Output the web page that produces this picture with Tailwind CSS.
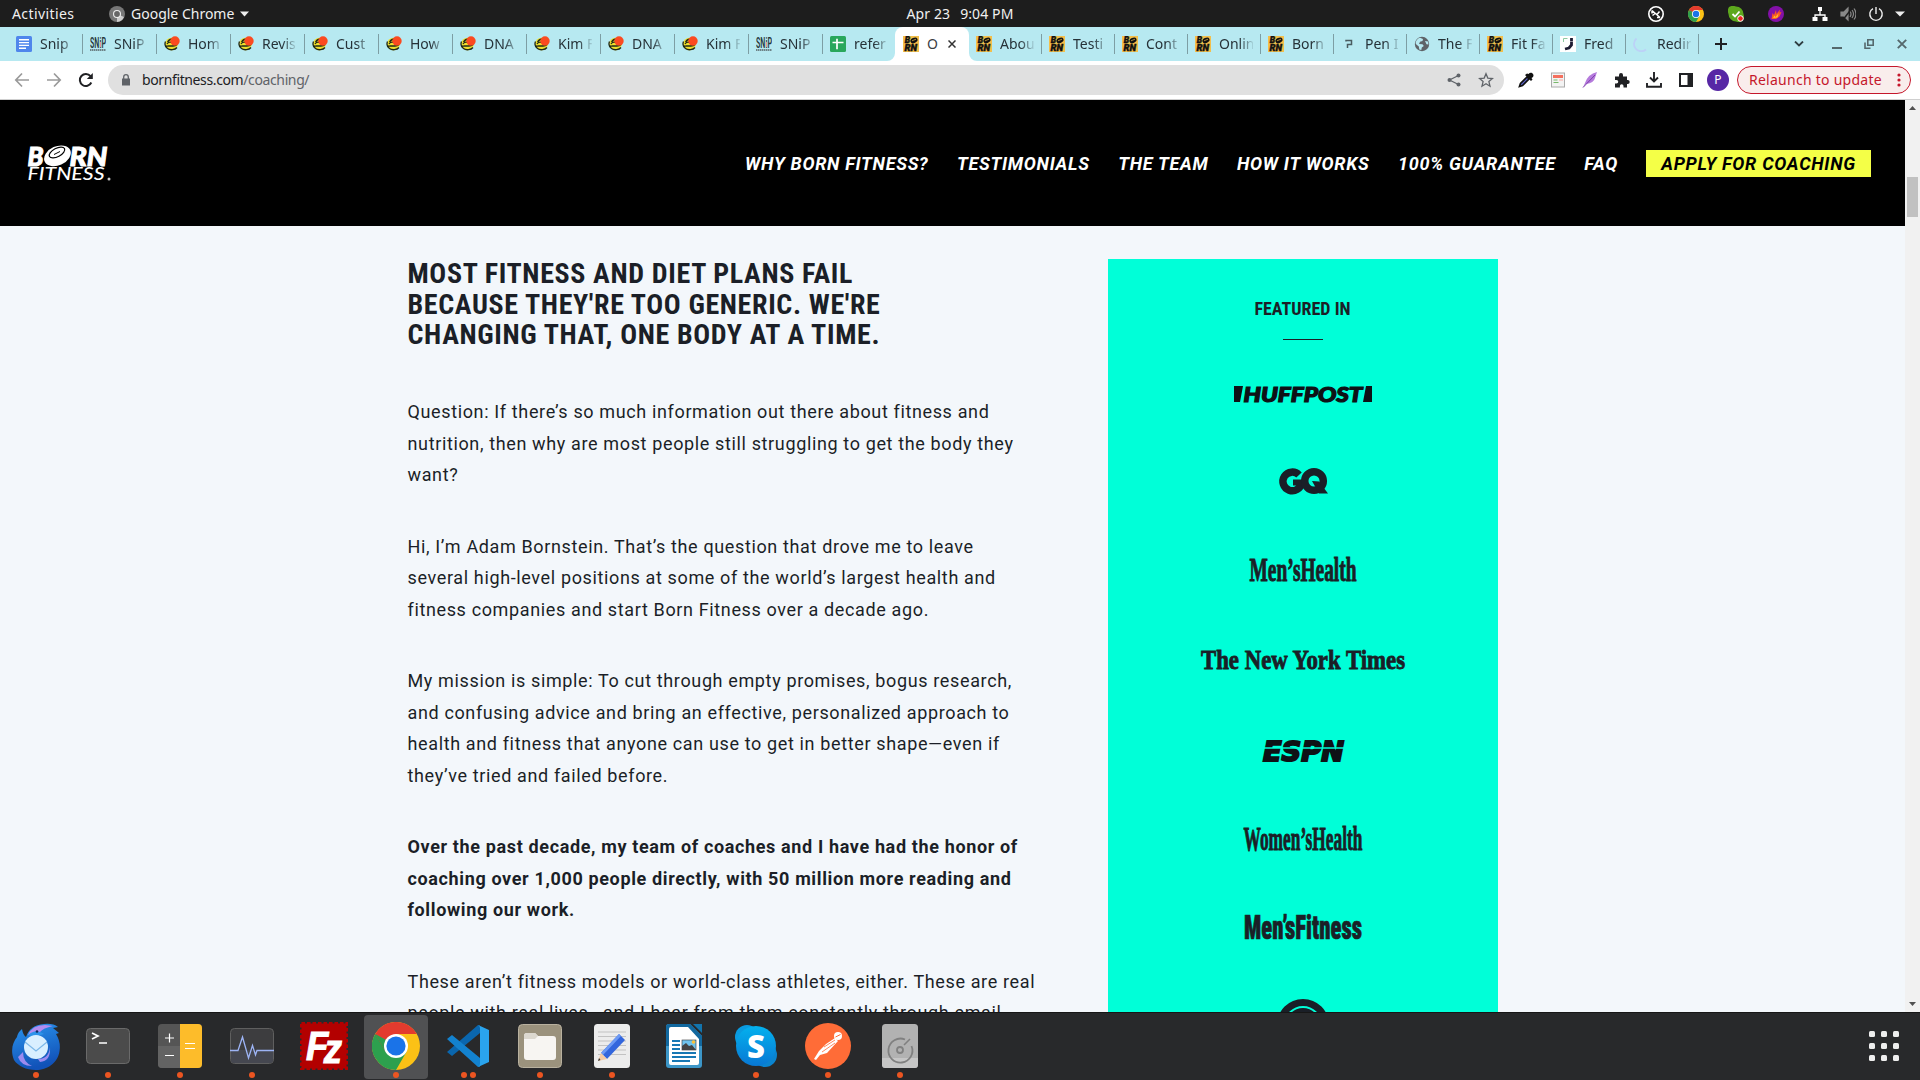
<!DOCTYPE html>
<html lang="en">
<head>
<meta charset="utf-8">
<title>Born Fitness Coaching</title>
<script src="https://cdn.jsdelivr.net/npm/@tailwindcss/browser@4"></script>
</head>
<body class="w-[1920px] h-[1080px] overflow-hidden flex flex-col bg-[#f3f7fb] font-['Noto_Sans',sans-serif] text-[14px]">

<svg class="hidden">
  <symbol id="f-doc" viewBox="0 0 16 16"><rect width="16" height="16" rx="1.5" fill="#4f86ec"/><path d="M3 3.8h10M3 6.6h10M3 9.4h10M3 12.2h7" stroke="#fff" stroke-width="1.4"/></symbol>
  <symbol id="f-snip" viewBox="0 0 16 16"><text x="0" y="11.5" font-family="Roboto Condensed, Roboto" font-weight="500" font-size="15" textLength="16" lengthAdjust="spacingAndGlyphs" fill="#25373b">SNiP</text><path d="M10.5 6v5" stroke="#e88f9a"/><path d="M0 14h16" stroke="#6d8287" stroke-width="2" stroke-dasharray="1.5 .5"/></symbol>
  <symbol id="f-burger" viewBox="0 0 16 16"><circle cx="7.500" cy="8" r="6.300" fill="#efdf2c"/><path d="M1.500 5.500C.5 8 1.500 11 3.500 12.500 6 14.500 11 14 13 11.500M1 8.500c0 2 2 1.500 3 1.500h5c2 0 3-.5 4-1.500M3.500 6q2-3 5-3M3 8q2-3 6-1" fill="none" stroke="#222a18" stroke-width="1.300"/><circle cx="11" cy="5" r="4.700" fill="#fb4a20"/></symbol>
  <symbol id="f-sheet" viewBox="0 0 16 16"><rect width="16" height="16" rx="1.5" fill="#29a75c"/><path d="M2.500 6.500h11M7 2.800v10.500" stroke="#fff" stroke-width="1.700"/></symbol>
  <symbol id="f-born" viewBox="0 0 16 16"><rect width="16" height="16" fill="#f3bf4b"/><g font-family="Roboto" font-weight="900" font-style="italic" font-size="8.500" fill="#111" stroke="#111" stroke-width=".4"><text x="1.800" y="7.200">B</text><text x="1.400" y="14.600" textLength="12.500" lengthAdjust="spacingAndGlyphs">RN</text></g><ellipse cx="11" cy="4.400" rx="3.700" ry="2.600" transform="rotate(-25 11 4.400)" fill="#111"/><path d="M9 4.800l4-1.600" stroke="#f3bf4b" stroke-width=".7"/></symbol>
  <symbol id="f-pen" viewBox="0 0 16 16"><path d="M5 5.500V4.500h5.500v4H6.500V12" fill="none" stroke="#4a5c60" stroke-width="1.500"/></symbol>
  <symbol id="f-globe" viewBox="0 0 16 16"><circle cx="8" cy="8" r="7.200" fill="#5f6368"/><path d="M6 1.800l3 1.200-.5 2-2.500.8L5 8l3.500.3 1.300 1.700-2 1.500-.5 2.500-2-.5-.5-3L1.800 8C1.500 5 3.500 2.500 6 1.800zM11 5l3 .5.500 3-2-.3z" fill="#b7e9f1"/></symbol>
  <symbol id="f-fred" viewBox="0 0 16 16"><rect width="16" height="16" fill="#fff"/><path d="M3.500 6V2.500h4" stroke="#8cc9a0" fill="none"/><path d="M11.500 2v3.500M11.500 6v3l-2.500 3-4 1" fill="none" stroke="#1d1c33" stroke-width="2.800"/></symbol>
  <symbol id="f-load" viewBox="0 0 16 16"><path d="M3.500 2.500A7 7 0 0 0 13 13.500" fill="none" stroke="#bcd1f7" stroke-width="1.800"/></symbol>
  <symbol id="chrome" viewBox="0 0 48 48"><circle cx="24" cy="24" r="24" fill="#fbc116"/><path d="M24 24L3.200 12A24 24 0 0 0 24 48L34.400 30z" fill="#2da04e"/><path d="M24 24H24L3.200 12A24 24 0 0 1 44.800 12H24z" fill="#e33b2e"/><path d="M3.200 12L13.600 30 24 12z" fill="#e33b2e"/><path d="M3.200 12L13.600 30 18 20z" fill="#2da04e"/><circle cx="24" cy="24" r="12" fill="#fff"/><circle cx="24" cy="24" r="9.600" fill="#1a73e8"/></symbol>
</svg>

<!-- Desktop top bar -->
<header class="h-[27px] shrink-0 bg-[#1d1d1d] text-[#f0f0f0] grid grid-cols-[1fr_auto_1fr] items-center leading-[26px]">
  <div class="flex items-center pl-3">
    <span class="tracking-[0.4px] w-[97px]">Activities</span>
    <svg class="size-4" viewBox="0 0 16 16"><circle cx="8" cy="8" r="8" fill="#777"/><path d="M8 8l7 3a8 8 0 0 1-7 5z" fill="#ccc"/><circle cx="8" cy="8" r="4" fill="#eee"/><circle cx="8" cy="8" r="2.900" fill="#666"/></svg>
    <span class="ml-[6px]">Google Chrome</span>
    <svg class="ml-[6px] w-[9px] h-[6px]" viewBox="0 0 9 6"><path d="M0 .5h9L4.500 5.500z" fill="#eee"/></svg>
  </div>
  <div class="flex gap-[10px] tracking-[0.1px]"><span>Apr 23</span><span>9:04 PM</span></div>
  <div class="flex items-center justify-end pr-[15px]">
    <svg class="size-4 mr-6" viewBox="0 0 16 16"><circle cx="8" cy="8" r="7.200" fill="none" stroke="#fff" stroke-width="1.600"/><path d="M4 4.500l8 7M4.500 9.500L7 7.500M9 8.500l2.500-3M4 4.500v3M12 11.500H9" fill="none" stroke="#fff" stroke-width="1.500"/></svg>
    <svg class="size-4 mr-6"><use href="#chrome"/></svg>
    <svg class="size-4 mr-6" viewBox="0 0 16 16"><path d="M1 1Q4-1 8 .5A7.500 7.500 0 0 1 15.500 8Q17 13 14 15 11 17 8 15.500A7.500 7.500 0 0 1 .5 8Q-1 4 1 1z" fill="#5da81d"/><path d="M4.500 8l2.500 2.500L11.500 5.500" stroke="#fff" stroke-width="1.800" fill="none"/><circle cx="12.500" cy="12.500" r="2.800" fill="#e22" stroke="#fff"/></svg>
    <svg class="size-4 mr-[28px]" viewBox="0 0 16 16"><circle cx="8" cy="8" r="8" fill="#8410a8"/><path d="M3.500 13L4.500 7 6 9 8 4l.5 4L12 3.500l-.5 3 2-.5-2 4.500L8 13z" fill="#fb5a23"/><path d="M5 12l1.500-2.500 1 1.500 3-3.500-1 4z" fill="#ffc629"/></svg>
    <svg class="size-4 mr-3" viewBox="0 0 16 16"><path d="M8 3v6M3 13V9h10v4" fill="none" stroke="#fff" stroke-width="1.300"/><path d="M6 1h4v4H6zM.5 11h5v4h-5zM10.500 11h5v4h-5z" fill="#fff"/></svg>
    <svg class="size-4 mr-3" viewBox="0 0 16 16" fill="none" stroke="#888" stroke-width="1.200"><path d="M1 6h3l4-4v12L4 10H1z" fill="#888"/><path d="M10 5q2 3 0 6M12 4q3 4 0 8M14 2.500q4 5.500 0 11"/><path d="M2 15L13 1" stroke="#1d1d1d" stroke-width="1.500"/></svg>
    <svg class="size-4 mr-[11px]" viewBox="0 0 16 16" fill="none" stroke="#eee" stroke-width="1.400"><path d="M8 1v7M5 2.700a6.200 6.200 0 1 0 6 0"/></svg>
    <svg class="w-[10px] h-[6px]" viewBox="0 0 10 6"><path d="M0 .5h10L5 5.500z" fill="#eee"/></svg>
  </div>
</header>

<!-- Browser tabs -->
<div class="h-[34px] shrink-0 bg-[#b7e9f1] flex items-stretch pl-[9px] text-[#263238]">
  <div id="tabs" class="flex w-[1691px]"></div>
  <div class="flex items-center flex-1">
    <svg class="size-3 ml-[15px]" viewBox="0 0 12 12"><path d="M6 0v12M0 6h12" stroke="#202124" stroke-width="2"/></svg>
    <svg class="ml-[67px] w-[10px] h-[6px]" viewBox="0 0 10 6"><path d="M1 .5l4 4 4-4" fill="none" stroke="#2f3e42" stroke-width="1.800"/></svg>
    <svg class="ml-[28px] w-[10px] h-[10px]" viewBox="0 0 10 10"><path d="M0 9h10" stroke="#55686c" stroke-width="2"/></svg>
    <svg class="ml-[22px] size-[10px]" viewBox="0 0 10 10"><path d="M3.800.8h5.400v5.400H3.800zM1 3.500V9.200h5.500" fill="none" stroke="#55686c" stroke-width="1.600"/></svg>
    <svg class="ml-[23px] size-[10px]" viewBox="0 0 10 10"><path d="M.8.8l8.400 8.400M9.200.8L.8 9.200" stroke="#55686c" stroke-width="1.900"/></svg>
  </div>
</div>

<!-- Browser toolbar -->
<div class="h-[39px] shrink-0 bg-white border-b border-[#cfcfcf] flex items-center pl-[14px]">
  <svg class="size-4 mr-4" viewBox="0 0 16 16" fill="none" stroke="#9a9a9a" stroke-width="1.700"><path d="M15 8H2M8 1.500L1.800 8 8 14.500"/></svg>
  <svg class="size-4 mr-4" viewBox="0 0 16 16" fill="none" stroke="#9a9a9a" stroke-width="1.700"><path d="M1 8h13M8 1.500L14.200 8 8 14.500"/></svg>
  <svg class="size-4 mr-[14px]" viewBox="0 0 16 16"><path d="M13.300 10.500A6 6 0 1 1 12.500 4.200" fill="none" stroke="#202124" stroke-width="2"/><path d="M14.800 1v6h-6z" fill="#202124"/></svg>
  <div class="w-[1396px] h-[30px] rounded-full bg-[#e0e0e0] flex items-center pl-[14px] pr-[10px] tracking-[-0.38px] leading-[20px]">
    <svg class="w-2 h-3" viewBox="0 0 8 12"><path d="M0 4.500h8v7H0z" fill="#5f6368"/><path d="M1.700 5V3a2.300 2.300 0 0 1 4.600 0v2" fill="none" stroke="#5f6368" stroke-width="1.300"/></svg>
    <span class="ml-3 text-[#202124] pb-px">bornfitness.com</span><span class="text-[#5f6368] pb-px">/coaching/</span>
    <svg class="ml-auto size-[14px] mr-[17px]" viewBox="0 0 14 14"><path d="M11.500 2.500L2.500 7l9 4.500" fill="none" stroke="#5f6368" stroke-width="1.300"/><circle cx="11.500" cy="2.500" r="2" fill="#5f6368"/><circle cx="2.500" cy="7" r="2" fill="#5f6368"/><circle cx="11.500" cy="11.500" r="2" fill="#5f6368"/></svg>
    <svg class="size-4" viewBox="0 0 16 16"><path d="M8 1.800l1.800 4.300 4.700.4-3.600 3.100 1.100 4.600L8 11.800l-4 2.400 1.100-4.600L1.500 6.500l4.700-.4z" fill="none" stroke="#5f6368" stroke-width="1.300"/></svg>
  </div>
  <div class="ml-[14px] flex items-center gap-4">
    <svg class="size-4" viewBox="0 0 16 16"><path d="M9 5L2.500 11.500 1.500 14.500l3-1L11 7z" fill="#5b62c9" stroke="#111" stroke-width="1.700"/><path d="M7 3l6 6 1.500-1.500-1-1.500C15.500 5 16 3.500 15 2S12 0 10.500 2L9 1.500z" fill="#111"/></svg>
    <svg class="size-4" viewBox="0 0 16 16"><rect x="1.500" y="1" width="13" height="14" fill="#f3f3f3" stroke="#aaa"/><path d="M3 4.500h10" stroke="#f4705e" stroke-width="3"/><path d="M3.500 8h4M3.500 10.500h5" stroke="#78b96a"/><path d="M9 8h4" stroke="#f9a8a0"/></svg>
    <svg class="size-4" viewBox="0 0 16 16"><path d="M15 0Q6 2 3 11l-2 4.500L4 12q8-1 9-6z" fill="#b57bdc"/><path d="M1 15.500L13 3" stroke="#7c3daa"/></svg>
    <svg class="size-4" viewBox="0 0 16 16"><path d="M1 4.500h4V3a2 2 0 0 1 4 0v1.500h4v3.500h.700a2 2 0 0 1 0 4H13v3.500H9.500V14a1.800 1.800 0 0 0-3.600 0v1.500H1V11.500h1.500a1.700 1.700 0 0 0 0-3.500H1z" fill="#202124"/></svg>
    <svg class="size-4" viewBox="0 0 16 16"><path d="M8 0v9M4 5.500l4 4 4-4M1 11v3.800h14V11" fill="none" stroke="#202124" stroke-width="1.900"/></svg>
    <svg class="size-4" viewBox="0 0 16 16"><path d="M2 2h12v12H2z" fill="none" stroke="#202124" stroke-width="2"/><path d="M9.500 2H14v12H9.500z" fill="#202124"/></svg>
    <span class="size-[22px] -ml-[3px] rounded-full bg-[#5727a5] text-white text-[12px] leading-[22px] text-center">P</span>
  </div>
  <div class="ml-[8px] w-[174px] h-[28px] rounded-full border border-[#c5172b] bg-[#f9edec] text-[#c5172b] flex items-center pl-[11px] leading-[20px]">
    <span class="tracking-[0.26px] whitespace-nowrap pb-px">Relaunch to update</span>
    <svg class="ml-[15px] w-[4px] h-[14px]" viewBox="0 0 4 14" fill="#c5172b"><circle cx="2" cy="2" r="1.600"/><circle cx="2" cy="7" r="1.600"/><circle cx="2" cy="12" r="1.600"/></svg>
  </div>
</div>

<!-- Page viewport -->
<div class="h-[912px] shrink-0 flex overflow-hidden">
  <div class="w-[1905px] flex flex-col overflow-hidden font-['Roboto',sans-serif] text-[#1b1f27]">
    <div class="h-[126px] shrink-0 bg-black flex items-center pl-[26px] pr-[34px] text-white">
      <svg class="w-[86px] h-[40px]" viewBox="0 0 86 40" fill="#fff" font-family="Lato, sans-serif" font-style="italic">
        <text x="1.500" y="22.500" font-size="27" font-weight="900" stroke="#fff" stroke-width="1" textLength="16" lengthAdjust="spacingAndGlyphs">B</text>
        <text x="43.500" y="22.500" font-size="27" font-weight="900" stroke="#fff" stroke-width="1" textLength="38" lengthAdjust="spacingAndGlyphs">RN</text>
        <ellipse cx="31.500" cy="13" rx="14" ry="9.500" transform="rotate(-24 31 13)"/>
        <ellipse cx="31" cy="9.500" rx="8.500" ry="4.200" transform="rotate(-28 31 9.500)" fill="none" stroke="#000" stroke-width="1.200"/><path d="M28 11.500l6-3" stroke="#000" stroke-width="1"/>
        <text x="1.500" y="37.300" font-size="17.500" font-weight="500" textLength="77" lengthAdjust="spacingAndGlyphs">FITNESS</text>
        <circle cx="83" cy="36" r="1.500" fill="#ccc"/>
      </svg>
      <nav class="ml-auto flex items-center text-[18px] font-bold italic tracking-[0.71px] leading-[27px] whitespace-nowrap">
        <span class="mr-[28.5px]">WHY BORN FITNESS?</span><span class="mr-[28.5px]">TESTIMONIALS</span><span class="mr-[28.5px]">THE TEAM</span><span class="mr-[28.5px]">HOW IT WORKS</span><span class="mr-[28.5px]">100% GUARANTEE</span><span class="mr-[28px]">FAQ</span>
        <span class="w-[225px] h-[27px] bg-[#f4ff47] text-black text-center">APPLY FOR COACHING</span>
      </nav>
    </div>
    <div class="flex pl-[407.5px] pt-[33px]">
      <main class="w-[700.5px]">
        <h2 class="font-['Roboto_Condensed','Roboto',sans-serif] font-stretch-condensed font-bold text-[28px] leading-[30.6px] tracking-[0.64px]">MOST FITNESS AND DIET PLANS FAIL<br>BECAUSE THEY'RE TOO GENERIC. WE'RE<br>CHANGING THAT, ONE BODY AT A TIME.</h2>
        <div class="pt-[45.6px] flex flex-col gap-[40px] text-[18px] leading-[31.5px] tracking-[0.635px] whitespace-nowrap">
          <p>Question: If there’s so much information out there about fitness and<br>nutrition, then why are most people still struggling to get the body they<br>want?</p>
          <p>Hi, I’m Adam Bornstein. That’s the question that drove me to leave<br>several high-level positions at some of the world’s largest health and<br>fitness companies and start Born Fitness over a decade ago.</p>
          <p>My mission is simple: To cut through empty promises, bogus research,<br>and confusing advice and bring an effective, personalized approach to<br>health and fitness that anyone can use to get in better shape—even if<br>they’ve tried and failed before.</p>
          <p class="font-bold">Over the past decade, my team of coaches and I have had the honor of<br>coaching over 1,000 people directly, with 50 million more reading and<br>following our work.</p>
          <p>These aren’t fitness models or world-class athletes, either. These are real<br>people with real lives—and I hear from them constantly through email,</p>
        </div>
      </main>
      <aside class="w-[390px] h-[800px] bg-[#00ffd8] flex flex-col items-center pt-[38px]">
        <h3 class="font-['Roboto_Condensed','Roboto',sans-serif] font-stretch-condensed font-bold text-[18px] leading-[24px] -ml-px">FEATURED IN</h3>
        <div class="mt-[18px] w-[40px] h-px bg-[#1b1f27]"></div>
        <svg class="mt-[46px] w-[138px] h-[16px] overflow-visible shrink-0" viewBox="0 0 138 16" fill="#0e1116"><path d="M0 0h9L6 16H0zM132 0h6v16h-9z"/><text x="9.500" y="15.500" font-family="Lato, sans-serif" font-weight="900" font-style="italic" font-size="21" stroke="#0e1116" stroke-width="1.200" textLength="119" lengthAdjust="spacingAndGlyphs">HUFFPOST</text></svg>
        <svg class="mt-[66px] w-[49px] h-[26px] overflow-visible shrink-0" viewBox="0 0 49 26" fill="none" stroke="#1a1f27" stroke-width="7.500"><path d="M20 7A9.300 9.300 0 1 0 22.500 14.500"/><path d="M14 14.500h11" stroke-width="6"/><circle cx="35" cy="13" r="9.300"/><path d="M33 13l7 .5 9 12H40z" fill="#1a1f27" stroke="none"/></svg>
        <svg class="mt-[63px] w-[108px] h-[25px] overflow-visible shrink-0" viewBox="0 0 108 25" fill="#1a1f27" stroke="#1a1f27" stroke-width="1"><text x=".5" y="24" font-family="Liberation Serif, serif" font-weight="700" font-size="34.500" textLength="107" lengthAdjust="spacingAndGlyphs">Men’sHealth</text></svg>
        <svg class="mt-[66px] w-[204px] h-[28px] overflow-visible shrink-0" viewBox="0 0 204 28" fill="#1a1f27" stroke="#1a1f27" stroke-width=".9"><text y="21" font-family="Liberation Serif, serif" font-weight="700" font-size="28" textLength="204" lengthAdjust="spacingAndGlyphs">The New York Times</text></svg>
        <svg class="mt-[65px] w-[81px] h-[21px] overflow-visible shrink-0" viewBox="0 0 81 21" fill="#0e1116" stroke="#0e1116" stroke-width="2"><text y="20" font-family="DejaVu Sans, sans-serif" font-weight="700" font-style="italic" font-size="26" textLength="81" lengthAdjust="spacingAndGlyphs">ESPN</text><path d="M0 7h82" stroke="#00ffd8" stroke-width="1.300"/></svg>
        <svg class="mt-[64px] w-[120px] h-[24px] overflow-visible shrink-0" viewBox="0 0 120 24" fill="#1a1f27" stroke="#1a1f27" stroke-width="1"><text x=".5" y="23.500" font-family="Liberation Serif, serif" font-weight="700" font-size="34.500" textLength="119" lengthAdjust="spacingAndGlyphs">Women’sHealth</text></svg>
        <svg class="mt-[65px] w-[118px] h-[24px] overflow-visible shrink-0" viewBox="0 0 118 24" fill="#1a1f27" stroke="#1a1f27" stroke-width=".7"><text y="23.500" font-family="Roboto Condensed, Roboto, sans-serif" font-weight="900" font-size="33" textLength="118" lengthAdjust="spacingAndGlyphs">Men’sFitness</text></svg>
        <svg class="mt-[60px] size-[52px] shrink-0 -ml-px" viewBox="0 0 52 52"><circle cx="26" cy="26" r="22.500" fill="none" stroke="#1a1f27" stroke-width="7"/><circle cx="26" cy="26" r="17" fill="#1a1f27"/></svg>
      </aside>
    </div>
  </div>
  <div class="w-[15px] bg-[#f1f1f1] flex flex-col items-center pt-[6px] pb-[6px]">
    <svg class="w-[7px] h-[4px]" viewBox="0 0 7 4"><path d="M0 4h7L3.500 0z" fill="#505050"/></svg>
    <div class="mt-[67px] w-[11px] h-[40px] bg-[#c1c1c1]"></div>
    <svg class="mt-auto w-[7px] h-[4px]" viewBox="0 0 7 4"><path d="M0 0h7L3.500 4z" fill="#505050"/></svg>
  </div>
</div>

<!-- Dock -->
<footer class="h-[68px] shrink-0 bg-[#28292b] border-t border-[#161616] flex items-center justify-between pr-[21px]">
  <div id="dock" class="flex"></div>
  <div class="grid grid-cols-3 gap-[6px] mb-px">
    <i class="size-[6px] rounded-[1.5px] bg-[#eee]"></i><i class="size-[6px] rounded-[1.5px] bg-[#eee]"></i><i class="size-[6px] rounded-[1.5px] bg-[#eee]"></i>
    <i class="size-[6px] rounded-[1.5px] bg-[#eee]"></i><i class="size-[6px] rounded-[1.5px] bg-[#eee]"></i><i class="size-[6px] rounded-[1.5px] bg-[#eee]"></i>
    <i class="size-[6px] rounded-[1.5px] bg-[#eee]"></i><i class="size-[6px] rounded-[1.5px] bg-[#eee]"></i><i class="size-[6px] rounded-[1.5px] bg-[#eee]"></i>
  </div>
</footer>

<script>
const tabs = [['doc','Snip'],['snip','SNiP'],['burger','Hom'],['burger','Revis'],['burger','Cust'],['burger','How'],['burger','DNA'],['burger','Kim F'],['burger','DNA'],['burger','Kim F'],['snip','SNiP'],['sheet','refer'],['born','O'],['born','Abou'],['born','Testi'],['born','Cont'],['born','Onlin'],['born','Born'],['pen','Pen I'],['globe','The F'],['born','Fit Fa'],['fred','Fred'],['load','Redir']];
document.getElementById('tabs').innerHTML = tabs.map(([icon, title], i) => {
  const fav = `<svg class="size-4 shrink-0"><use href="#f-${icon}"/></svg>`;
  if (i === 12) return `<div class="relative -ml-[2px] w-[74px] bg-white rounded-t-[8px] flex items-center pl-[8px] text-[#3c4043]">
    <svg class="absolute -left-[8px] bottom-0 size-2" viewBox="0 0 8 8"><path d="M8 0v8H0a8 8 0 0 0 8-8z" fill="#fff"/></svg>
    <svg class="absolute -right-[8px] bottom-0 size-2" viewBox="0 0 8 8"><path d="M0 0v8h8a8 8 0 0 1-8-8z" fill="#fff"/></svg>
    ${fav}<span class="ml-2 w-[14px] pb-px whitespace-nowrap">${title}</span>
    <svg class="ml-[7px] size-[8px]" viewBox="0 0 8 8"><path d="M.5.5l7 7M7.500.5l-7 7" stroke="#333" stroke-width="1.500"/></svg></div>`;
  const label = `<span class="ml-2 w-[34px] pb-px whitespace-nowrap [mask-image:linear-gradient(to_right,#000_60%,transparent_105%)]">${title}</span>`;
  const sep = i === 11 ? '' : '<span class="ml-auto w-px h-5 bg-[#7d9ea4]"></span>';
  return i < 12 ? `<div class="w-[74px] shrink-0 flex items-center pl-[7px]">${fav}${label}${sep}</div>`
                : `<div class="w-[73px] shrink-0 flex items-center pl-[7px]">${fav}${label}${sep}</div>`;
}).join('');

const apps = [
 [1,`<defs><linearGradient id="tb" x2=".3" y2="1"><stop stop-color="#2b95ee"/><stop offset="1" stop-color="#1152b8"/></linearGradient></defs><path d="M2 38C-2 28 1 20 5 15q1-5 5-8 1 6 4 8Q18 3 32 2q9-1 14 3l-5 1 6 5-3 1q5 8 3.500 17C46 41 35 48 24 48 14 48 6 44 2 38z" fill="url(#tb)"/><path d="M16 13Q20 3 33 3l8 1Q31 6 28 10l-8 3z" fill="#b28cf0"/><path d="M16 13Q24 6 32 12l-10 3z" fill="#2d93ea"/><circle cx="25" cy="9.500" r="1.300" fill="#102a60"/><path d="M6 35q3 9 14 9-9-4-9-14zM26 37q11 0 12-12 1 14-10 15z" fill="#9c8bf0"/><circle cx="24" cy="25" r="12" fill="#d9efff"/><path d="M13 20l11 9 11-9" fill="none" stroke="#7db8e8" stroke-width="1.200"/>`],
 [1,`<rect x="2.500" y="6.500" width="43" height="35" rx="4" fill="#4b4b4b" stroke="#6a6a6a"/><path d="M8 11l6 3-6 3" fill="none" stroke="#fff" stroke-width="1.700"/><path d="M15 21h8" stroke="#fff" stroke-width="1.500"/>`],
 [1,`<rect x="2" y="2" width="44" height="44" rx="4" fill="#555"/><path d="M2 24h22v22H6q-4 0-4-4z" fill="#636363"/><path d="M24 2h18q4 0 4 4v36q0 4-4 4H24z" fill="#fdbc2a"/><path d="M9 16h9M13.500 11.500v9M9 33.500h9M29 21.500h10M29 26.500h10" stroke="#fff" stroke-width="1.200"/>`],
 [1,`<rect x="2.500" y="6.500" width="43" height="35" rx="4" fill="#3d3d3f" stroke="#5f5f5f"/><path d="M3 28h42v10q0 3-3 3H6q-3 0-3-3z" fill="#454750"/><path d="M2 28.500h8L14.500 15 20.500 36 24.500 23.500 27.500 33l1.500-4.500h17" fill="none" stroke="#9db4f5" stroke-width="1.300"/>`],
 [0,`<rect x="1.500" y="1.500" width="45" height="45" fill="#b30000" stroke="#b30000" stroke-width="3" stroke-dasharray="3.500 2"/><text x="6" y="38" font-family="Liberation Sans" font-weight="700" font-style="italic" font-size="40" fill="#fff" stroke="#fff" textLength="36" lengthAdjust="spacingAndGlyphs">F<tspan dx="-5" dy="3">z</tspan></text>`],
 [1,`<use href="#chrome"/>`],
 [2,`<path d="M3 30l5 4L36 11V3.500L34 3z" fill="#0a66ae"/><path d="M3 17l5-4 28 23v8.500L34 45z" fill="#1382cf"/><path d="M34 3l11 5v32l-11 5q2-1 2-3V6q0-2-2-3z" fill="#2aa4ee"/>`],
 [1,`<rect x="2.500" y="2.500" width="43" height="43" rx="4" fill="#9b927d" stroke="#b9b19f"/><path d="M8 14q0-3 3-3h8l3 3h15q3 0 3 3v18q0 3-3 3H11q-3 0-3-3z" fill="#f7f5f2"/><path d="M8 14q0-3 3-3h8l3 3-3 3H8z" fill="#dcd8cf"/>`],
 [1,`<rect x="6" y="2" width="36" height="44" rx="3.500" fill="#ececec"/><path d="M10 10h28M10 14.500h28M10 19h28M10 23.500h28M10 28h28M10 32.500h28" stroke="#c2c2c2"/><path d="M31 12l6 6-18 19-6-6z" fill="#3366dd"/><path d="M31 12l2 2-18 19-2-2z" fill="#6d9af5"/><path d="M13 31l6 6-9 2z" fill="#f5cba4"/><path d="M11 36l1.500 2-2.500 1z" fill="#333"/>`],
 [0,`<path d="M9 2h21l12 12v29q0 3-3 3H9q-3 0-3-3V5q0-3 3-3z" fill="#3c96c8"/><path d="M9 2h21l12 12v10H6V5q0-3 3-3z" fill="#12689f"/><path d="M11 5h17l11 12v24q0 2-2 2H11q-2 0-2-2V7q0-2 2-2z" fill="#fff"/><path d="M33 2h9v9z" fill="#1274ad"/><path d="M12 19h8M12 23h8M12 27h8M12 31h24M12 35h24M12 39h18" stroke="#1878b4" stroke-width="1.800"/><rect x="22" y="18" width="14" height="10" fill="#6fc3ee" stroke="#333" stroke-width=".6"/><path d="M22 28v-4l4-3 3 3 3-1 4 5z" fill="#444"/><circle cx="33.500" cy="20" r="1.800" fill="#fbc33a"/>`],
 [1,`<circle cx="15" cy="15" r="12" fill="#0a9be0"/><circle cx="33" cy="33" r="12" fill="#0a84d0"/><circle cx="24" cy="24" r="20" fill="url(#sk)"/><defs><linearGradient id="sk" x2="0" y2="1"><stop stop-color="#04b1ee"/><stop offset="1" stop-color="#0878d4"/></linearGradient></defs><text x="24" y="35.500" text-anchor="middle" font-family="Open Sans" font-weight="800" font-size="31" fill="#fff">S</text>`],
 [1,`<circle cx="24" cy="24" r="23" fill="#ff6c37"/><circle cx="34" cy="14" r="4" fill="#fff"/><path d="M31 16l3 3-11 12-7 2-4 5-2-1 5-8 7-7z" fill="#fff"/><path d="M20 25l11-7M18 30l13-9" stroke="#ff6c37" stroke-width=".8"/><path d="M31.500 15l5-2.500" stroke="#ff6c37"/>`],
 [1,`<rect x="6" y="2" width="36" height="44" rx="3.500" fill="#b2b2b2"/><path d="M6 36h36v6.500q0 3.500-3.500 3.500h-29Q6 46 6 42.500z" fill="#c6c6c6"/><path d="M29 17.500A12 12 0 1 0 35.500 24" fill="none" stroke="#808080" stroke-width="1.800"/><circle cx="24" cy="28" r="3" fill="none" stroke="#808080" stroke-width="1.800"/><path d="M28 23l6-6" stroke="#808080" stroke-width="1.600"/>`]
];
const dot = '<i class="size-[6px] rounded-full bg-[#ec5521]"></i>';
document.getElementById('dock').innerHTML = apps.map(([n, art], i) => {
  const inner = `<svg class="size-12 shrink-0" viewBox="0 0 48 48">${art}</svg><div class="mt-[2px] h-[6px] flex gap-[3px]">${dot.repeat(n)}</div>`;
  return i === 5 ? `<div class="w-16 mx-1 h-16 rounded-[4px] bg-[#505153] flex flex-col items-center pt-[7px]">${inner}</div>`
                 : `<div class="w-16 mx-1 h-16 flex flex-col items-center pt-[7px]">${inner}</div>`;
}).join('');
</script>
</body>
</html>
